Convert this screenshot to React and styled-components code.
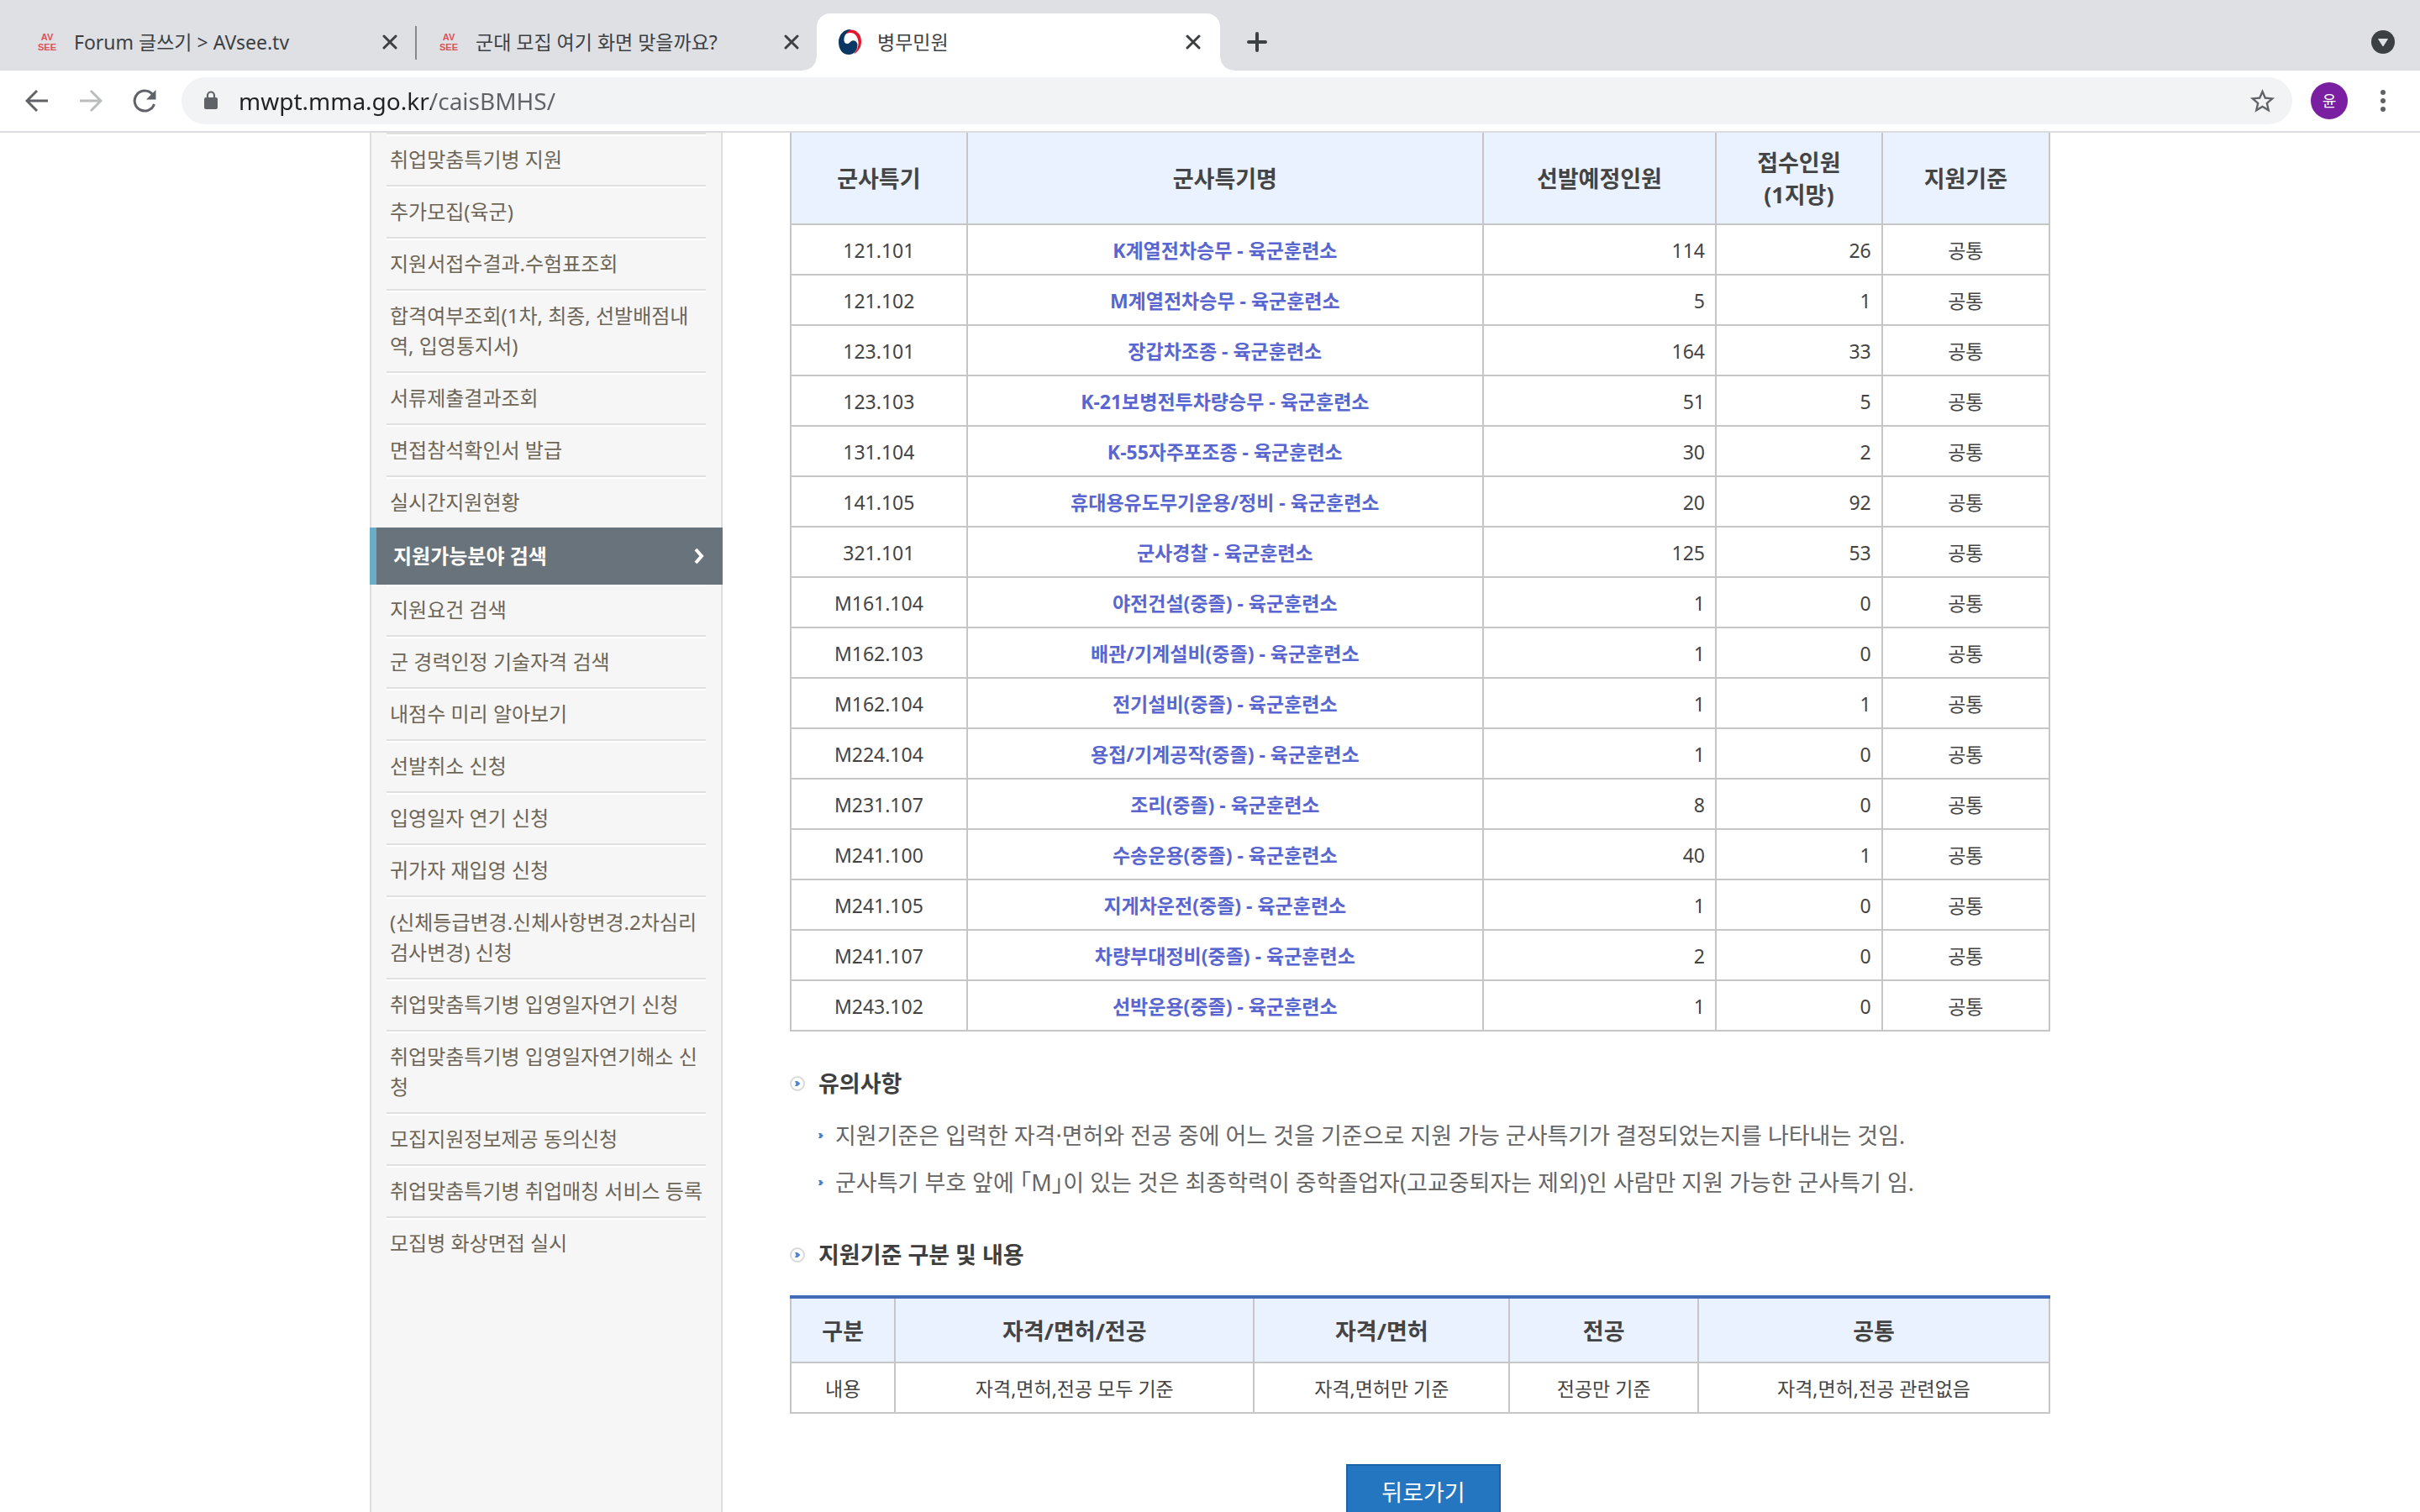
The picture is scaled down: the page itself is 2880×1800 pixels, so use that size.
import React from "react";
import styled, { createGlobalStyle, css } from "styled-components";

const GlobalStyle = createGlobalStyle`
  *, *::before, *::after { box-sizing: border-box; }
  html, body { margin: 0; height: 100%; overflow: hidden; background: #fff; }
  body, button, input { font-family: "Noto Sans", "Noto Sans CJK KR", sans-serif; }
  button { border: 0; padding: 0; background: none; color: inherit; cursor: pointer; }
  ul, h2, p { margin: 0; padding: 0; }
  ul { list-style: none; }
  a { color: inherit; text-decoration: none; }
  svg { display: block; flex: none; }
`;

const Window = styled.div`
  display: flex;
  flex-direction: column;
  height: 100vh;
`;

/* Browser frame */

const TabStrip = styled.div`
  display: flex;
  align-items: flex-end;
  height: 84px;
  padding: 0 28px 0 16px;
  background: #dfe0e4;
  color: #3c4043;
`;

const Tab = styled.div`
  position: relative;
  display: flex;
  align-items: center;
  flex: 0 1 478px;
  height: 68px;
  padding: 0 18px 0 26px;
  border-radius: 16px 16px 0 0;

  ${(p) =>
    p.$divided &&
    css`
      &::after {
        content: "";
        position: absolute;
        right: -2px;
        top: 15px;
        width: 2px;
        height: 40px;
        background: #85888c;
      }
    `}

  ${(p) =>
    p.$active &&
    css`
      flex-basis: 480px;
      padding-right: 20px;
      background: #fff;

      &::before,
      &::after {
        content: "";
        position: absolute;
        bottom: 0;
        width: 16px;
        height: 16px;
      }
      &::before {
        left: -16px;
        background: radial-gradient(circle at 0 0, transparent 15px, #fff 16px);
      }
      &::after {
        right: -16px;
        background: radial-gradient(circle at 100% 0, transparent 15px, #fff 16px);
      }
    `}
`;

const TabLabel = styled.button`
  display: flex;
  align-items: center;
  flex: 1;
  gap: 18px;
  min-width: 0;
  font-size: 23px;
  line-height: 32px;
  white-space: nowrap;
  text-align: left;
`;

const SiteMark = styled.span`
  display: flex;
  flex-direction: column;
  align-items: center;
  width: 28px;
  font-family: "Liberation Sans", sans-serif;
  font-size: 11px;
  font-weight: 700;
  line-height: 12px;
  color: #dd5055;
`;

const IconButton = styled.button`
  display: flex;
  align-items: center;
  justify-content: center;
  width: ${(p) => p.$size || 32}px;
  height: ${(p) => p.$size || 32}px;
  flex: none;
  color: ${(p) => p.$tone || "#3c4043"};
`;

const StripSide = styled.div`
  display: flex;
  flex: 1;
  align-items: center;
  justify-content: space-between;
  height: 68px;
  padding-left: 28px;
`;

const Toolbar = styled.div`
  display: flex;
  align-items: center;
  flex: none;
  height: 74px;
  padding: 0 20px;
  border-bottom: 2px solid #dadcdf;
  background: #fff;
`;

const NavButtons = styled.div`
  display: flex;
  gap: 16px;
  margin-right: 20px;
`;

const AddressBar = styled.form`
  display: flex;
  align-items: center;
  flex: 1;
  height: 56px;
  padding: 0 12px 0 26px;
  border-radius: 28px;
  background: #f1f3f4;
`;

const AddressInput = styled.input`
  flex: 1;
  min-width: 0;
  margin-left: 24px;
  padding: 0;
  border: 0;
  outline: 0;
  font-size: 28px;
  line-height: 40px;
  color: transparent;
  background: linear-gradient(90deg, #202124 229px, #5f6368 229px);
  background-clip: text;
  -webkit-background-clip: text;
`;

const Avatar = styled.button`
  width: 44px;
  height: 44px;
  margin: 0 18px 0 22px;
  flex: none;
  border-radius: 50%;
  background: #7b1fa2;
  color: #fff;
  font-size: 18px;
  line-height: 44px;
  text-align: center;
`;

/* Page */

const Page = styled.div`
  display: flex;
  flex: 1;
  align-items: stretch;
  width: 100%;
  max-width: 2000px;
  min-height: 0;
  margin: 0 auto;
`;

const Sidebar = styled.nav`
  flex: 0 0 420px;
  border: solid #dedede;
  border-width: 0 2px;
  background: #f6f6f6;
`;

const Menu = styled.ul`
  margin: 0 18px;
  border-top: 2px solid #e0e0e0;
`;

const MenuItem = styled.li`
  border-top: 2px solid #fff;
  border-bottom: ${(p) => (p.$last ? 0 : 2)}px solid #e0e0e0;
`;

const MenuLink = styled.a`
  display: block;
  padding: 10px 0 12px 4px;
  font-size: 24px;
  line-height: 36px;
  white-space: nowrap;
  color: #6d6556;
`;

const CurrentItem = styled.li`
  margin: 0 -20px;
`;

const CurrentLink = styled.a`
  display: flex;
  align-items: center;
  justify-content: space-between;
  height: 68px;
  padding: 0 22px 0 20px;
  border-left: 8px solid #6bacc8;
  background: #69737c;
  color: #fff;
  font-size: 24px;
  font-weight: 700;
  line-height: 36px;
`;

const Content = styled.main`
  flex: 1;
  min-width: 0;
  margin-left: 80px;
`;

const Table = styled.table`
  width: 100%;
  border-collapse: collapse;
  table-layout: fixed;
  color: #444;

  th,
  td {
    padding: 2px 12px 0;
    border: 2px solid #c6c6c6;
    text-align: center;
  }
  th {
    height: ${(p) => p.$headHeight}px;
    background: #eaf2ff;
    font-size: 27px;
    font-weight: 700;
    line-height: 38px;
  }
  thead tr:first-child th {
    border-top: ${(p) => (p.$ruled ? "4px solid #426cb8" : "0")};
  }
  td {
    height: 60px;
    font-size: 23px;
    line-height: 36px;
  }
`;

const NumberCell = styled.td`
  && {
    text-align: right;
  }
`;

const SpecialtyLink = styled.a`
  color: #5966cf;
  font-weight: 700;
`;

const SectionTitle = styled.h2`
  display: flex;
  align-items: center;
  gap: 16px;
  color: #3f3f3f;
  font-size: 27px;
  font-weight: 700;
  line-height: 40px;
`;

const Notes = styled.section`
  padding: 42px 0 46px;
`;

const NoteList = styled.ul`
  display: flex;
  flex-direction: column;
  gap: 16px;
  padding: 22px 0 0 34px;
`;

const Note = styled.li`
  display: flex;
  align-items: center;
  gap: 14px;
  color: #666;
  font-size: 27px;
  line-height: 40px;
  font-feature-settings: "halt";
`;

const Criteria = styled.section`
  display: flex;
  flex-direction: column;
  gap: 28px;
`;

const Actions = styled.div`
  display: flex;
  justify-content: center;
  padding: 60px 0 0 8px;
`;

const BackButton = styled.button`
  width: 184px;
  height: 68px;
  border: 2px solid #1763a8;
  background: #2376bf;
  color: #fff;
  font-size: 27px;
  line-height: 40px;
`;

/* Icons */

const CloseIcon = () => (
  <svg width="18" height="18" viewBox="0 0 18 18" stroke="currentColor" strokeWidth="3" strokeLinecap="round">
    <path d="M2 2l14 14M16 2L2 16" />
  </svg>
);

const PlusIcon = () => (
  <svg width="24" height="24" viewBox="0 0 24 24" stroke="currentColor" strokeWidth="4" strokeLinecap="round">
    <path d="M12 2v20M2 12h20" />
  </svg>
);

const TabSearchIcon = () => (
  <svg width="28" height="28" viewBox="0 0 28 28">
    <circle cx="14" cy="14" r="14" fill="#3c4043" />
    <path d="M8.600 10.500h10.800L14 19z" fill="#dee1e6" stroke="#dee1e6" strokeLinejoin="round" />
  </svg>
);

const ArrowIcon = ({ forward }) => (
  <svg width="28" height="28" viewBox="0 0 28 28" fill="none" stroke="currentColor" strokeWidth="3">
    <path d={forward ? "M1 14h24M14 2l12 12-12 12" : "M27 14H3M14 2L2 14l12 12"} />
  </svg>
);

const ReloadIcon = () => (
  <svg width="28" height="28" viewBox="0 0 28 28" fill="none" stroke="currentColor" strokeWidth="3">
    <path d="M23.600 6.600A12 12 0 1 0 25.500 18" />
    <path d="M27.500 1v11.500H16z" fill="currentColor" stroke="none" />
  </svg>
);

const LockIcon = () => (
  <svg width="18" height="24" viewBox="0 0 18 24">
    <rect x="1" y="8" width="16" height="14" rx="2" fill="#5f6368" />
    <path d="M5 9V5.500a4 4 0 0 1 8 0V9" fill="none" stroke="#5f6368" strokeWidth="2.200" />
  </svg>
);

const StarIcon = () => (
  <svg width="35" height="35" viewBox="0 0 24 24" fill="#5f6368">
    <path d="M22 9.240l-7.190-.62L12 2 9.190 8.630 2 9.240l5.460 4.730L5.820 21 12 17.270 18.180 21l-1.630-7.030L22 9.240zM12 15.400l-3.760 2.270 1-4.280-3.320-2.880 4.380-.38L12 6.100l1.710 4.040 4.380.38-3.320 2.880 1 4.280L12 15.400z" />
  </svg>
);

const MenuDotsIcon = () => (
  <svg width="8" height="28" viewBox="0 0 8 28" fill="#5f6368">
    <circle cx="4" cy="4" r="3" />
    <circle cx="4" cy="14" r="3" />
    <circle cx="4" cy="24" r="3" />
  </svg>
);

const GovernmentMark = () => (
  <svg width="28" height="32" viewBox="0 0 28 32">
    <circle cx="14" cy="15.500" r="12" fill="#fff" />
    <path d="M8 4C13 0 20 1 24 6c4 5 4 14 0 19-2 3-4 4.500-6 5 4-4 6-9 5.500-14C23 9 19 5 14 5c-3 0-6 1-8 4z" fill="#e6142e" />
    <path d="M15 1C7 0 0 7 0 16c0 9 5 15 12 15 6 0 10-4 10.500-11 .2-5-5-7.500-8-4.500-2 2.500-4.500 3.500-7 1.500C4.500 13 8 4 15 1z" fill="#0b3764" />
  </svg>
);

const ChevronIcon = () => (
  <svg width="12" height="20" viewBox="0 0 12 20" fill="none" stroke="#fff" strokeWidth="4">
    <path d="M2 2l7 8-7 8" />
  </svg>
);

const TitleBullet = () => (
  <svg width="18" height="18" viewBox="0 0 18 18">
    <circle cx="9" cy="9" r="8" fill="#fff" stroke="#d9d9d9" strokeWidth="2" />
    <path d="M6 6h3l3.500 3L9 12H6l1.500-3z" fill="#4a86d6" />
  </svg>
);

const NoteBullet = () => (
  <svg width="6" height="8" viewBox="0 0 6 8">
    <path d="M0 1h3l3 3-3 3H0l1.500-3z" fill="#4a80cc" />
  </svg>
);

/* Data */

const menuBefore = [
  ["취업맞춤특기병 지원"],
  ["추가모집(육군)"],
  ["지원서접수결과.수험표조회"],
  ["합격여부조회(1차, 최종, 선발배점내", "역, 입영통지서)"],
  ["서류제출결과조회"],
  ["면접참석확인서 발급"],
  ["실시간지원현황"],
];

const menuAfter = [
  ["지원요건 검색"],
  ["군 경력인정 기술자격 검색"],
  ["내점수 미리 알아보기"],
  ["선발취소 신청"],
  ["입영일자 연기 신청"],
  ["귀가자 재입영 신청"],
  ["(신체등급변경.신체사항변경.2차심리", "검사변경) 신청"],
  ["취업맞춤특기병 입영일자연기 신청"],
  ["취업맞춤특기병 입영일자연기해소 신", "청"],
  ["모집지원정보제공 동의신청"],
  ["취업맞춤특기병 취업매칭 서비스 등록"],
  ["모집병 화상면접 실시"],
];

const specialties = [
  ["121.101", "K계열전차승무", 114, 26],
  ["121.102", "M계열전차승무", 5, 1],
  ["123.101", "장갑차조종", 164, 33],
  ["123.103", "K-21보병전투차량승무", 51, 5],
  ["131.104", "K-55자주포조종", 30, 2],
  ["141.105", "휴대용유도무기운용/정비", 20, 92],
  ["321.101", "군사경찰", 125, 53],
  ["M161.104", "야전건설(중졸)", 1, 0],
  ["M162.103", "배관/기계설비(중졸)", 1, 0],
  ["M162.104", "전기설비(중졸)", 1, 1],
  ["M224.104", "용접/기계공작(중졸)", 1, 0],
  ["M231.107", "조리(중졸)", 8, 0],
  ["M241.100", "수송운용(중졸)", 40, 1],
  ["M241.105", "지게차운전(중졸)", 1, 0],
  ["M241.107", "차량부대정비(중졸)", 2, 0],
  ["M243.102", "선박운용(중졸)", 1, 0],
];

const notes = [
  "지원기준은 입력한 자격·면허와 전공 중에 어느 것을 기준으로 지원 가능 군사특기가 결정되었는지를 나타내는 것임.",
  "군사특기 부호 앞에 「M」이 있는 것은 최종학력이 중학졸업자(고교중퇴자는 제외)인 사람만 지원 가능한 군사특기 임.",
];

const BrowserTab = ({ icon, title, active, divided }) => (
  <Tab $active={active} $divided={divided}>
    <TabLabel type="button">
      {icon}
      {title}
    </TabLabel>
    <IconButton type="button" aria-label="탭 닫기" $size={24}>
      <CloseIcon />
    </IconButton>
  </Tab>
);

const AvseeMark = () => (
  <SiteMark>
    <span>AV</span>
    <span>SEE</span>
  </SiteMark>
);

const MenuEntry = ({ lines, last }) => (
  <MenuItem $last={last}>
    <MenuLink href="#">
      {lines.map((line, i) => (
        <React.Fragment key={line}>
          {i > 0 && <br />}
          {line}
        </React.Fragment>
      ))}
    </MenuLink>
  </MenuItem>
);

const Columns = ({ widths }) => (
  <colgroup>
    {widths.map((width, i) => (
      <col key={i} style={{ width: `${width}%` }} />
    ))}
  </colgroup>
);

export default function App() {
  return (
    <Window>
      <GlobalStyle />
      <TabStrip>
        <BrowserTab icon={<AvseeMark />} title="Forum 글쓰기 > AVsee.tv" divided />
        <BrowserTab icon={<AvseeMark />} title="군대 모집 여기 화면 맞을까요?" />
        <BrowserTab icon={<GovernmentMark />} title="병무민원" active />
        <StripSide>
          <IconButton type="button" aria-label="새 탭">
            <PlusIcon />
          </IconButton>
          <IconButton type="button" aria-label="탭 검색">
            <TabSearchIcon />
          </IconButton>
        </StripSide>
      </TabStrip>
      <Toolbar>
        <NavButtons>
          <IconButton type="button" aria-label="뒤로" $size={48} $tone="#5f6368">
            <ArrowIcon />
          </IconButton>
          <IconButton type="button" aria-label="앞으로" $size={48} $tone="#babcbe">
            <ArrowIcon forward />
          </IconButton>
          <IconButton type="button" aria-label="새로고침" $size={48} $tone="#5f6368">
            <ReloadIcon />
          </IconButton>
        </NavButtons>
        <AddressBar>
          <LockIcon />
          <AddressInput type="text" aria-label="주소" defaultValue="mwpt.mma.go.kr/caisBMHS/" />
          <IconButton type="button" aria-label="북마크" $size={48}>
            <StarIcon />
          </IconButton>
        </AddressBar>
        <Avatar type="button">윤</Avatar>
        <IconButton type="button" aria-label="메뉴" $size={48}>
          <MenuDotsIcon />
        </IconButton>
      </Toolbar>
      <Page>
        <Sidebar>
          <Menu>
            {menuBefore.map((lines, i) => (
              <MenuEntry key={lines[0]} lines={lines} last={i === menuBefore.length - 1} />
            ))}
            <CurrentItem>
              <CurrentLink href="#" aria-current="page">
                지원가능분야 검색
                <ChevronIcon />
              </CurrentLink>
            </CurrentItem>
            {menuAfter.map((lines, i) => (
              <MenuEntry key={lines[0]} lines={lines} last={i === menuAfter.length - 1} />
            ))}
          </Menu>
        </Sidebar>
        <Content>
          <Table $headHeight={109}>
            <Columns widths={[14, 41, 18.5, 13.2, 13.3]} />
            <thead>
              <tr>
                <th>군사특기</th>
                <th>군사특기명</th>
                <th>선발예정인원</th>
                <th>
                  접수인원
                  <br />
                  (1지망)
                </th>
                <th>지원기준</th>
              </tr>
            </thead>
            <tbody>
              {specialties.map(([code, name, planned, received]) => (
                <tr key={code}>
                  <td>{code}</td>
                  <td>
                    <SpecialtyLink href="#">{`${name} - 육군훈련소`}</SpecialtyLink>
                  </td>
                  <NumberCell>{planned}</NumberCell>
                  <NumberCell>{received}</NumberCell>
                  <td>공통</td>
                </tr>
              ))}
            </tbody>
          </Table>
          <Notes>
            <SectionTitle>
              <TitleBullet />
              유의사항
            </SectionTitle>
            <NoteList>
              {notes.map((note) => (
                <Note key={note}>
                  <NoteBullet />
                  {note}
                </Note>
              ))}
            </NoteList>
          </Notes>
          <Criteria>
            <SectionTitle>
              <TitleBullet />
              지원기준 구분 및 내용
            </SectionTitle>
            <Table $headHeight={78} $ruled>
              <Columns widths={[8.3, 28.5, 20.3, 15, 27.9]} />
              <thead>
                <tr>
                  <th>구분</th>
                  <th>자격/면허/전공</th>
                  <th>자격/면허</th>
                  <th>전공</th>
                  <th>공통</th>
                </tr>
              </thead>
              <tbody>
                <tr>
                  <td>내용</td>
                  <td>자격,면허,전공 모두 기준</td>
                  <td>자격,면허만 기준</td>
                  <td>전공만 기준</td>
                  <td>자격,면허,전공 관련없음</td>
                </tr>
              </tbody>
            </Table>
          </Criteria>
          <Actions>
            <BackButton type="button">뒤로가기</BackButton>
          </Actions>
        </Content>
      </Page>
    </Window>
  );
}
